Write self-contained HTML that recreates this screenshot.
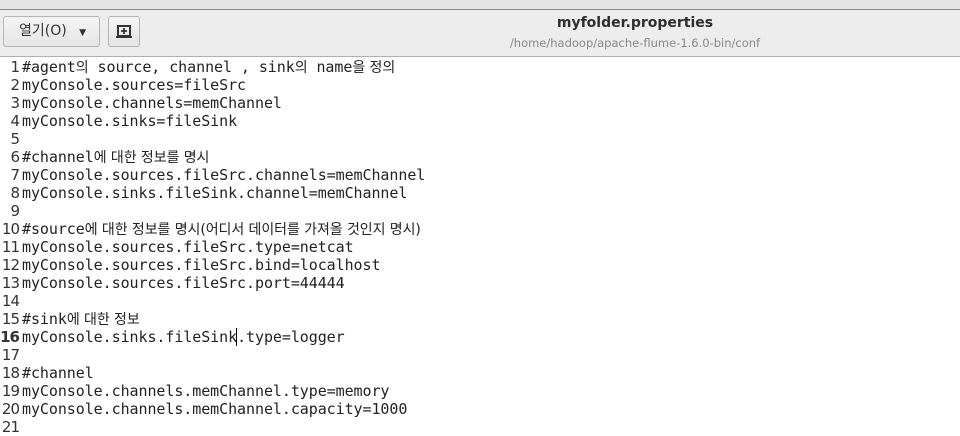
<!DOCTYPE html>
<html><head><meta charset="utf-8"><style>
body{margin:0;width:960px;height:434px;overflow:hidden;background:#fff;font-family:"DejaVu Sans","Noto Sans CJK KR",sans-serif;}
#top{position:absolute;left:0;top:0;width:960px;height:9px;background:#e4e4e4;border-bottom:1px solid #8a8a8a;}
#hdr{position:absolute;left:0;top:10px;width:960px;height:46px;background:#ededed;border-bottom:1px solid #b0b0b0;}
.btn{position:absolute;top:6px;height:31px;border:1px solid #b6b6b6;border-radius:3px;background:linear-gradient(#f4f4f4,#e6e6e6);box-sizing:border-box;}
#b1{left:3px;width:97px;font-size:14px;color:#333;line-height:29px;padding-left:15px;}
#b2{left:108px;width:32px;}
#title{position:absolute;left:0;width:1270px;text-align:center;top:5px;font-weight:bold;font-size:14px;color:#2e2e2e;}
#sub{position:absolute;left:0;width:1270px;text-align:center;top:26px;font-size:11.5px;color:#888;}
#code{position:absolute;left:0;top:58px;}
.l{height:18px;line-height:18px;font-size:15px;white-space:pre;position:relative;}
.n{display:inline-block;width:19px;text-align:right;color:#333;font-family:"DejaVu Sans",sans-serif;font-size:15px;letter-spacing:-1px;}
.t{position:absolute;left:22px;top:0;font-family:"DejaVu Sans Mono","Noto Sans CJK KR",monospace;font-size:15px;letter-spacing:-0.07px;color:#222;}
.k{font-family:"DejaVu Sans","Noto Sans CJK KR",sans-serif;font-size:14px;}
</style></head><body>
<div id="top"></div>
<div id="hdr">
<div class="btn" id="b1">열기(O) <span style="font-size:9px;margin-left:8px">▼</span></div>
<div class="btn" id="b2"><svg width="30" height="29" viewBox="0 0 30 29"><path d="M9 9h12v10H9z M7 20h16" fill="none" stroke="#333" stroke-width="2"/><path d="M15 11v6M12 14h6" stroke="#333" stroke-width="1.8"/></svg></div>
<div id="title">myfolder.properties</div>
<div id="sub">/home/hadoop/apache-flume-1.6.0-bin/conf</div>
</div>
<div id="code">
<div class="l"><span class="n">1</span><span class="t">#agent<span class="k">의</span> source, channel , sink<span class="k">의</span> name<span class="k">을 정의</span></span></div>
<div class="l"><span class="n">2</span><span class="t">myConsole.sources=fileSrc</span></div>
<div class="l"><span class="n">3</span><span class="t">myConsole.channels=memChannel</span></div>
<div class="l"><span class="n">4</span><span class="t">myConsole.sinks=fileSink</span></div>
<div class="l"><span class="n">5</span></div>
<div class="l"><span class="n">6</span><span class="t">#channel<span class="k">에 대한 정보를 명시</span></span></div>
<div class="l"><span class="n">7</span><span class="t">myConsole.sources.fileSrc.channels=memChannel</span></div>
<div class="l"><span class="n">8</span><span class="t">myConsole.sinks.fileSink.channel=memChannel</span></div>
<div class="l"><span class="n">9</span></div>
<div class="l"><span class="n">10</span><span class="t">#source<span class="k">에 대한 정보를 명시(어디서 데이터를 가져올 것인지 명시)</span></span></div>
<div class="l"><span class="n">11</span><span class="t">myConsole.sources.fileSrc.type=netcat</span></div>
<div class="l"><span class="n">12</span><span class="t">myConsole.sources.fileSrc.bind=localhost</span></div>
<div class="l"><span class="n">13</span><span class="t">myConsole.sources.fileSrc.port=44444</span></div>
<div class="l"><span class="n">14</span></div>
<div class="l"><span class="n">15</span><span class="t">#sink<span class="k">에 대한 정보</span></span></div>
<div class="l"><span class="n" style="font-weight:bold">16</span><span class="t">myConsole.sinks.fileSink<span style="border-left:1px solid #000;margin-left:-1px"></span>.type=logger</span></div>
<div class="l"><span class="n">17</span></div>
<div class="l"><span class="n">18</span><span class="t">#channel</span></div>
<div class="l"><span class="n">19</span><span class="t">myConsole.channels.memChannel.type=memory</span></div>
<div class="l"><span class="n">20</span><span class="t">myConsole.channels.memChannel.capacity=1000</span></div>
<div class="l"><span class="n">21</span></div>
</div>
</body></html>
